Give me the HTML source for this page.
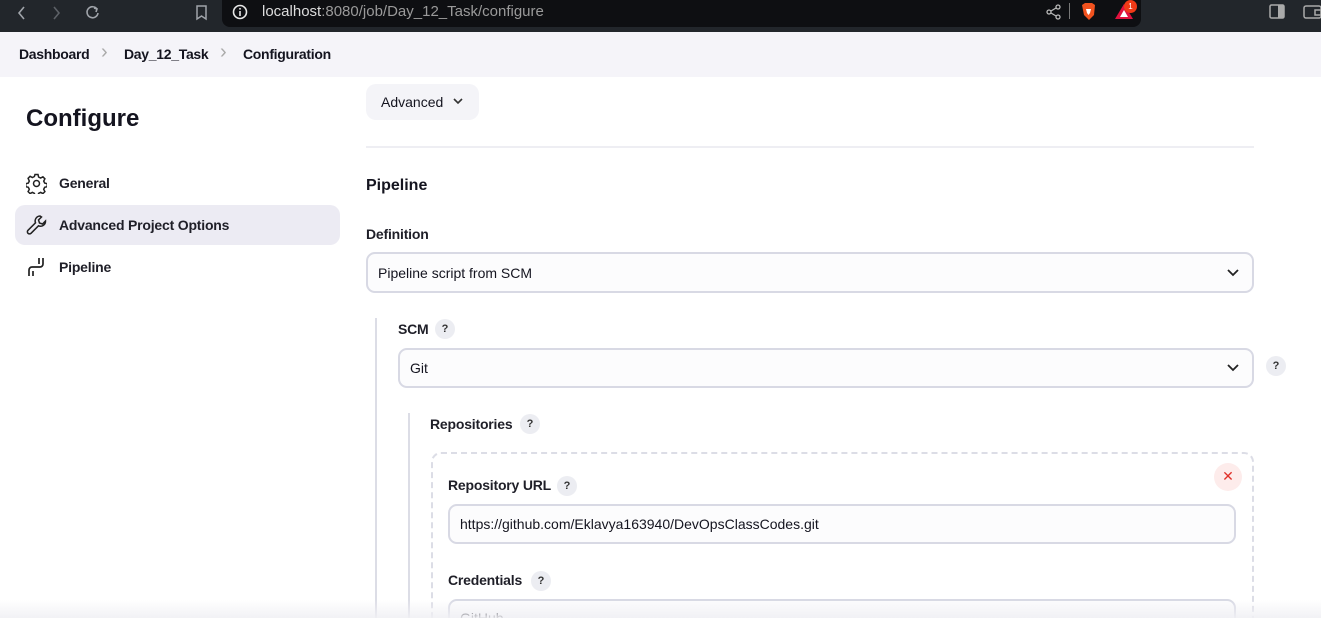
<!DOCTYPE html>
<html style="width:1321px;height:618px;overflow:hidden"><head><meta charset="utf-8"><style>
*{box-sizing:border-box;margin:0;padding:0}
body{width:1321px;height:618px;overflow:hidden;background:#fff;font-family:"Liberation Sans","DejaVu Sans",sans-serif;color:#14141f;position:relative}
.abs{position:absolute}
.chrome{left:0;top:0;width:1321px;height:32px;background:#22262b}
.url{left:222px;top:0;width:919px;height:27px;background:#0e0f12;border-radius:0 0 8px 8px}
.crumb{left:0;top:32px;width:1321px;height:45px;background:#f5f4f9;font-size:14px;font-weight:bold}
.lbl{font-size:14px;font-weight:bold;color:#1f1f28;letter-spacing:-0.2px}
.sel{border:2px solid #d8d9e4;border-radius:9px;background:#fcfcfd;font-size:14px;padding-left:10px;display:flex;align-items:center}
.q{width:20px;height:20px;border-radius:50%;background:#ecedf2;font-size:11px;font-weight:bold;text-align:center;line-height:20px;display:inline-block;color:#333}
.chev{position:absolute;right:12px;top:50%;margin-top:-5px}
</style></head><body>
<div class="abs chrome"></div>
<div class="abs url"></div>
<svg class="abs" style="left:14px;top:4px" width="110" height="18" fill="none" stroke="#a0a4aa" stroke-width="1.6">
<path d="M10 3 L5 9 L10 15"/><path d="M40 3 L45 9 L40 15" stroke="#5d6167"/><path d="M83 5 A5.5 5.5 0 1 0 84 9"/><path d="M80 4 L83 5 L82 8"/></svg>
<svg class="abs" style="left:195px;top:4px" width="14" height="18" fill="none" stroke="#a0a4aa" stroke-width="1.5"><path d="M2 2h9v13l-4.5-3-4.5 3z"/></svg>
<svg class="abs" style="left:232px;top:4px" width="16" height="16"><circle cx="8" cy="8" r="6.5" fill="none" stroke="#e8e8e8" stroke-width="1.6"/><rect x="7.2" y="7" width="1.6" height="5" fill="#e8e8e8"/><rect x="7.2" y="4" width="1.6" height="1.6" fill="#e8e8e8"/></svg>
<div class="abs" style="left:262px;top:3px;font-size:15px;color:#ddd">localhost<span style="color:#9a9a9a">:8080/job/Day_12_Task/configure</span></div>
<svg class="abs" style="left:1044px;top:3px" width="20" height="18" fill="none" stroke="#bbb" stroke-width="1.3"><circle cx="14" cy="4" r="2"/><circle cx="5" cy="9" r="2"/><circle cx="14" cy="14" r="2"/><path d="M7 8l5-3M7 10l5 3"/></svg>
<div class="abs" style="left:1069px;top:3px;width:1px;height:16px;background:#777"></div>
<svg class="abs" style="left:1080px;top:2px" width="17" height="19"><path d="M2 3l3-2h7l3 2-1 10-5 5-5-5z" fill="#f1521e"/><path d="M6 7h5l-1 4-1.5 2-1.5-2z" fill="#fff"/></svg>
<svg class="abs" style="left:1114px;top:3px" width="20" height="17"><path d="M10 1L19 16H1z" fill="#e0123e"/><path d="M10 7l4 7H6z" fill="#fff"/></svg>
<div class="abs" style="left:1124px;top:0;width:13px;height:13px;border-radius:50%;background:#f03a17;color:#fff;font-size:8px;text-align:center;line-height:13px">1</div>
<svg class="abs" style="left:1269px;top:4px" width="16" height="15"><rect x="1" y="1" width="14" height="13" rx="1.5" fill="none" stroke="#aaa" stroke-width="1.5"/><rect x="9" y="1" width="6" height="13" fill="#aaa"/></svg>
<svg class="abs" style="left:1303px;top:4px" width="18" height="15" fill="none" stroke="#aaa" stroke-width="1.5"><rect x="1" y="2" width="17" height="12" rx="2"/><path d="M12 6h6v5h-6z"/></svg>

<div class="abs crumb">
<span class="abs" style="left:19px;top:14px;letter-spacing:-0.3px">Dashboard</span>
<span class="abs" style="left:101px;top:9px;color:#aaa;font-weight:normal;font-size:20px">›</span>
<span class="abs" style="left:124px;top:14px;letter-spacing:-0.3px">Day_12_Task</span>
<span class="abs" style="left:220px;top:9px;color:#aaa;font-weight:normal;font-size:20px">›</span>
<span class="abs" style="left:243px;top:14px;letter-spacing:-0.3px">Configuration</span>
</div>

<div class="abs" style="left:26px;top:105px;font-size:24px;font-weight:bold">Configure</div>
<svg class="abs" style="left:26px;top:173px" width="21" height="21" fill="none" stroke="#222" stroke-width="1.5"><circle cx="10.5" cy="10.5" r="3"/><path d="M9 1.5h3l.6 2.5 2 1 2.3-1.2 2 2-1.2 2.3 1 2 2.5.6v3l-2.5.6-1 2 1.2 2.3-2 2-2.3-1.2-2 1-.6 2.5H9l-.6-2.5-2-1-2.3 1.2-2-2 1.2-2.3-1-2-2.5-.6v-3l2.5-.6 1-2L2.1 5.3l2-2 2.3 1.2 2-1z"/></svg>
<div class="abs lbl" style="left:59px;top:175px">General</div>
<div class="abs" style="left:15px;top:205px;width:325px;height:40px;background:#ecebf3;border-radius:10px"></div>
<svg class="abs" style="left:26px;top:214px" width="22" height="22" fill="none" stroke="#222" stroke-width="1.5"><path d="M14 2a5 5 0 0 0-4.5 6.8L2 16.3a2 2 0 0 0 3 3l7.5-7.5A5 5 0 0 0 19.5 7l-3 3-3-1-1-3 3-3z"/></svg>
<div class="abs lbl" style="left:59px;top:217px">Advanced Project Options</div>
<svg class="abs" style="left:27px;top:257px" width="20" height="20" fill="none" stroke="#222" stroke-width="1.7"><path d="M2 19v-6a3 3 0 0 1 3-3h8a3 3 0 0 0 3-3V1"/><path d="M6 19v-5M12 7V1"/></svg>
<div class="abs lbl" style="left:59px;top:259px">Pipeline</div>

<div class="abs" style="left:366px;top:84px;width:113px;height:36px;background:#f4f4f8;border-radius:10px;font-size:14px;padding:10px 0 0 15px">Advanced</div>
<svg class="abs" style="left:452px;top:97px" width="12" height="9" fill="none" stroke="#333" stroke-width="1.6"><path d="M2 2l4 4 4-4"/></svg>
<div class="abs" style="left:366px;top:146px;width:888px;height:2px;background:#eeeef3"></div>
<div class="abs" style="left:366px;top:177px;font-size:16px;font-weight:bold">Pipeline</div>
<div class="abs lbl" style="left:366px;top:226px">Definition</div>
<div class="abs sel" style="left:366px;top:252px;width:888px;height:41px">Pipeline script from SCM<svg class="chev" width="14" height="10" fill="none" stroke="#222" stroke-width="1.8"><path d="M2 2l5 5 5-5"/></svg></div>

<div class="abs" style="left:375px;top:318px;width:2px;height:300px;background:#dcdde6"></div>
<div class="abs lbl" style="left:398px;top:321px">SCM</div><span class="abs q" style="left:435px;top:319px">?</span>
<div class="abs sel" style="left:398px;top:348px;width:856px;height:40px">Git<svg class="chev" width="14" height="10" fill="none" stroke="#222" stroke-width="1.8"><path d="M2 2l5 5 5-5"/></svg></div>
<span class="abs q" style="left:1266px;top:356px">?</span>

<div class="abs" style="left:408px;top:413px;width:2px;height:205px;background:#dcdde6"></div>
<div class="abs lbl" style="left:430px;top:416px">Repositories</div><span class="abs q" style="left:520px;top:414px">?</span>
<div class="abs" style="left:431px;top:452px;width:823px;height:180px;border:2px dashed #dcdde6;border-radius:10px"></div>
<div class="abs" style="left:1214px;top:463px;width:28px;height:28px;border-radius:50%;background:#fdeceb;color:#e0312a;font-size:14px;text-align:center;line-height:27px">✕</div>
<div class="abs lbl" style="left:448px;top:477px">Repository URL</div><span class="abs q" style="left:557px;top:476px">?</span>
<div class="abs sel" style="left:448px;top:504px;width:788px;height:40px">https://github.com/Eklavya163940/DevOpsClassCodes.git</div>
<div class="abs lbl" style="left:448px;top:572px">Credentials</div><span class="abs q" style="left:531px;top:571px">?</span>
<div class="abs sel" style="left:448px;top:599px;width:788px;height:40px;align-items:flex-start;padding-top:9px">GitHub</div>
<div class="abs" style="left:0;top:600px;width:1321px;height:18px;background:linear-gradient(rgba(245,245,248,0),rgba(240,240,244,.9))"></div>
</body></html>
